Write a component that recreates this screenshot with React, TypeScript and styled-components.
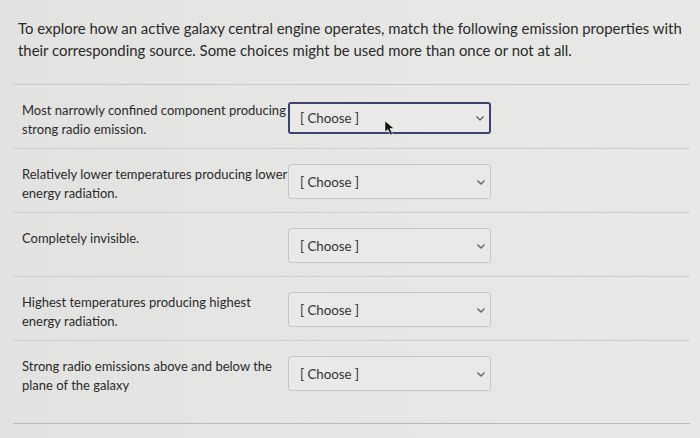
import React from "react";
import styled, { createGlobalStyle } from "styled-components";

const Global = createGlobalStyle`
  html, body { margin: 0; padding: 0; background: #e4e4e2; }
  body { font-family: Lato, "Liberation Sans", sans-serif; color: #2b2b2b; }
`;

const Page = styled.div`
  width: 700px;
  height: 438px;
  overflow: hidden;
  background: linear-gradient(90deg, #e2e2e0 0%, #e6e6e4 50%, #e8e8e6 100%);
  padding: 0 10px 0 13px;
  box-sizing: border-box;
`;

const Intro = styled.p`
  margin: 0;
  padding: 17px 0 0 5px;
  height: 85px;
  box-sizing: border-box;
  font-size: 14.9px;
  line-height: 22px;
  color: #2a2a2a;
  border-bottom: 1px solid #c9c9c7;
`;

const Row = styled.div<{ $last?: boolean }>`
  display: flex;
  align-items: flex-start;
  box-sizing: border-box;
  height: ${(p) => (p.$last ? "83px" : "64px")};
  padding: 15px 0 0 9px;
  border-bottom: 1px solid ${(p) => (p.$last ? "#b9b9b7" : "#cdcdcb")};
  position: relative;
`;

const Label = styled.div`
  width: 266px;
  font-size: 13px;
  line-height: 19px;
  padding-top: 1px;
  color: #2b2b2b;
`;

const Select = styled.div<{ $focused?: boolean }>`
  box-sizing: border-box;
  width: 203px;
  height: ${(p) => (p.$focused ? "32px" : "35px")};
  margin-top: ${(p) => (p.$focused ? "2px" : "0")};
  border: ${(p) => (p.$focused ? "2px solid #3b4272" : "1px solid #c6c6c4")};
  border-radius: 3px;
  background: #e9e9e7;
  display: flex;
  align-items: center;
  justify-content: space-between;
  padding: 0 3px 0 ${(p) => (p.$focused ? "10px" : "11px")};
  font-size: 13.3px;
  color: #333;
`;

const Chevron = styled.svg`
  width: 12px;
  height: 12px;
  color: #5a5f75;
`;

const Cursor = styled.svg`
  position: absolute;
  left: 371px;
  top: 35px;
  width: 14px;
  height: 16px;
`;

const items = [
  "Most narrowly confined component producing strong radio emission.",
  "Relatively lower temperatures producing lower energy radiation.",
  "Completely invisible.",
  "Highest temperatures producing highest energy radiation.",
  "Strong radio emissions above and below the plane of the galaxy",
];

export default function App() {
  return (
    <>
      <Global />
      <Page>
        <Intro>
          To explore how an active galaxy central engine operates, match the following emission properties with
          their corresponding source. Some choices might be used more than once or not at all.
        </Intro>
        {items.map((t, i) => (
          <Row key={i} $last={i === items.length - 1}>
            <Label>{t}</Label>
            <Select $focused={i === 0}>
              <span>[ Choose ]</span>
              <Chevron viewBox="0 0 12 12" fill="none">
                <path d="M2.5 4.5 L6 8 L9.5 4.5" stroke="currentColor" strokeWidth="1.3" />
              </Chevron>
            </Select>
            {i === 0 && (
              <Cursor viewBox="0 0 14 16">
                <path d="M1 1 L1 12 L4 9.5 L6.5 15 L8.5 14 L6 8.5 L10 8.5 Z" fill="#111" stroke="#eee" strokeWidth="0.6" />
              </Cursor>
            )}
          </Row>
        ))}
      </Page>
    </>
  );
}
